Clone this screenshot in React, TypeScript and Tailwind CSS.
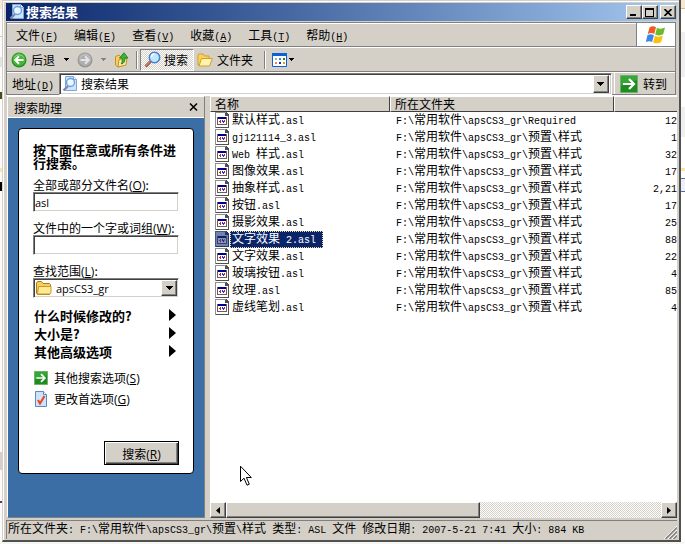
import React, { useState } from 'react';
import clsx from 'clsx';

const raised =
  'bg-[#d4d0c8] border border-t-white border-l-white border-r-[#404040] border-b-[#404040] shadow-[inset_-1px_-1px_0_#808080]';
const sunken =
  'bg-white border border-t-[#808080] border-l-[#808080] border-r-white border-b-white shadow-[inset_1px_1px_0_#404040,inset_-1px_-1px_0_#d4d0c8]';

const LOCATION = 'F:\\常用软件\\apsCS3_gr\\预置\\样式';

const files = [
  { name: '默认样式.asl', folder: 'F:\\常用软件\\apsCS3_gr\\Required', size: '12' },
  { name: 'gj121114_3.asl', folder: LOCATION, size: '1' },
  { name: 'Web 样式.asl', folder: LOCATION, size: '32' },
  { name: '图像效果.asl', folder: LOCATION, size: '17' },
  { name: '抽象样式.asl', folder: LOCATION, size: '2,21' },
  { name: '按钮.asl', folder: LOCATION, size: '17' },
  { name: '摄影效果.asl', folder: LOCATION, size: '25' },
  { name: '文字效果 2.asl', folder: LOCATION, size: '88' },
  { name: '文字效果.asl', folder: LOCATION, size: '22' },
  { name: '玻璃按钮.asl', folder: LOCATION, size: '4' },
  { name: '纹理.asl', folder: LOCATION, size: '85' },
  { name: '虚线笔划.asl', folder: LOCATION, size: '4' },
];

const menus = [
  { label: '文件', hotkey: 'F' },
  { label: '编辑', hotkey: 'E' },
  { label: '查看', hotkey: 'V' },
  { label: '收藏', hotkey: 'A' },
  { label: '工具', hotkey: 'T' },
  { label: '帮助', hotkey: 'H' },
];

// Latin runs are half as wide as the Chinese glyphs next to them
const Mixed = ({ text }: { text: string }) => (
  <>
    {text.split(/([\x20-\x7e]+)/).map((part, i) =>
      i % 2 ? (
        <span key={i} className="font-['Liberation_Mono',monospace] text-[10px] leading-none whitespace-pre">
          {part}
        </span>
      ) : (
        part
      )
    )}
  </>
);

const MonoHotkey = ({ letter }: { letter: string }) => (
  <span className="font-['Liberation_Mono',monospace] text-[10px] leading-none">
    (<u>{letter}</u>)
  </span>
);

const Hotkey = ({ letter }: { letter: string }) => (
  <span className="font-['Open_Sans',sans-serif] leading-none">
    (<u>{letter}</u>)
  </span>
);

const SearchPageIcon = () => (
  <svg width="16" height="16" viewBox="0 0 16 16" className="shrink-0">
    <path d="M3.5.5h8l3 3v11h-11z" fill="#cfe3fb" stroke="#7fa6da" />
    <path d="M11.5.5v3h3" fill="#fff" stroke="#7fa6da" />
    <path d="M6 10 1.5 14.5" stroke="#7c8cae" strokeWidth="2.4" />
    <circle cx="8.500" cy="6.500" r="4" fill="#e6f7ff" stroke="#6c9fdc" strokeWidth="1.4" />
    <path d="M6.500 6c.2-1 1-1.600 2-1.700" fill="none" stroke="#fff" strokeWidth="1.200" />
  </svg>
);

const MagnifierIcon = () => (
  <svg width="17" height="17" viewBox="0 0 17 17" className="shrink-0">
    <path d="M6.5 10.5 1.5 15.5" stroke="#a4583e" strokeWidth="3" />
    <path d="M6.5 10 1.5 15" stroke="#e6a184" strokeWidth="1" />
    <circle cx="10.500" cy="6.500" r="5.200" fill="#bfe8fd" stroke="#4b7fd0" strokeWidth="1.500" />
    <path d="M7.500 6c0-2 1.500-3 3-3" fill="none" stroke="#fff" strokeWidth="1.500" />
  </svg>
);

const RoundArrowIcon = ({ forward = false }: { forward?: boolean }) => (
  <svg width="16" height="16" viewBox="0 0 16 16" className="shrink-0">
    <circle cx="8" cy="8" r="7.500" fill={forward ? '#959595' : '#23911f'} />
    <circle cx="8" cy="7.500" r="6.500" fill={forward ? '#aeaeae' : '#46b53a'} />
    <path d="M3 6a5.500 5.500 0 0 1 10 0" fill="none" stroke={forward ? '#c6c6c6' : '#8fdc84'} />
    <path
      d={forward ? 'M3.500 8h8M8 4.200 11.800 8 8 11.800' : 'M12.500 8h-8M8 4.200 4.200 8 8 11.800'}
      fill="none"
      stroke={forward ? '#e4e4e4' : '#fff'}
      strokeWidth="2"
    />
  </svg>
);

const FolderUpIcon = () => (
  <svg width="16" height="16" viewBox="0 0 16 16" className="shrink-0">
    <path d="M1.500 4.500 5 3l1.500 1.500 5-.5v8.500L4 15l-2.500-2z" fill="#f6cf5c" stroke="#c1922a" />
    <path d="m4 15 1-7.500 8-1.500-1 7z" fill="#ffeb9c" stroke="#c1922a" />
    <path
      d="M7.500 12c3-1 3.500-3 3.500-6h3L10 .8 5.500 6h2.700c0 3 0 4-1 6z"
      fill="#3cb43c"
      stroke="#167a1c"
      strokeWidth=".8"
    />
  </svg>
);

const OpenFolderIcon = () => (
  <svg width="16" height="16" viewBox="0 0 16 16" className="shrink-0">
    <path d="M1 13V3l1-1h4l1.500 2H12v9z" fill="#f9d25e" stroke="#d19f2b" />
    <path d="M2 14 4.500 6.500h10.800L12.500 14z" fill="#fff3ae" stroke="#d19f2b" />
  </svg>
);

const FolderIcon = () => (
  <svg width="16" height="14" viewBox="0 0 16 14" className="shrink-0">
    <path d="M.5 12V2l1-1.500h4l1.500 2h6.500l1 1V12l-1 1.500h-12z" fill="#f6cf5f" stroke="#a87d1e" />
    <path d="M2.500 5.500h12.500v6l-1 1.500h-12.500z" fill="#ffe992" stroke="#c99829" />
  </svg>
);

const ViewsIcon = () => (
  <svg width="15" height="14" viewBox="0 0 15 14" className="shrink-0">
    <path d="M.5.5h14v13H.5z" fill="#fff" stroke="#0b62d8" />
    <path d="M0 0h15v3H0z" fill="#0b62d8" />
    <path d="M3 5h2v2H3z" fill="#a8a8c4" />
    <path d="M7 5h2v2H7z" fill="#4f7fd0" />
    <path d="M11 5h2v2h-2z" fill="#1c8a1c" />
    <path d="M3 9h2v2H3z" fill="#f0805c" />
    <path d="M7 9h2v2H7z" fill="#123c9c" />
    <path d="M11 9h2v2h-2z" fill="#e0a21c" />
  </svg>
);

const GoIcon = ({ size }: { size: number }) => (
  <svg width={size} height={size} viewBox="0 0 18 18" className="shrink-0">
    <path d="M.5.5h17v17H.5z" fill="#1f8c22" stroke="#6fae6e" />
    <path d="M1 1h16v4L1 11z" fill="#48b546" opacity=".6" />
    <path d="M3 9h11M9 4l5 5-5 5" fill="none" stroke="#fff" strokeWidth="2.200" />
  </svg>
);

const PreferencesIcon = () => (
  <svg width="14" height="16" viewBox="0 0 14 16" className="shrink-0">
    <path d="M1.500.5h8l3 3v12h-11z" fill="#cfe2fa" stroke="#5d8ac6" />
    <path d="M9.500.5v3h3" fill="#fff" stroke="#5d8ac6" />
    <path d="m4 9 2 3.500L10.500 5" fill="none" stroke="#e8451c" strokeWidth="2" />
  </svg>
);

const FileIcon = ({ selected }: { selected: boolean }) => (
  <svg width="14" height="16" viewBox="0 0 14 16" shapeRendering="crispEdges" className="shrink-0">
    <path d="M0 0h11l3 3v13H0z" fill={selected ? '#26345e' : '#505050'} />
    <path d="M1 1h9v3h3v11H1z" fill={selected ? '#7483ad' : '#fff'} />
    <path d="M0 0h11v1H1v15H0z" fill={selected ? '#46557f' : '#909090'} />
    <path d="M2 5h10v8H2z" fill={selected ? '#34446f' : '#606060'} />
    <path d="M3 6h8v6H3z" fill={selected ? '#8592b8' : '#fff'} />
    <path d="M3 5h8v2H3z" fill={selected ? '#0a246a' : '#000090'} />
    <path d="M4 9h1v1H4zM5 8h1v3H5z" fill={selected ? '#8a2a5c' : '#e01818'} />
    <path d="M7 8h1v2H7zM8 9h1v2H8z" fill={selected ? '#1a2fa0' : '#2432e8'} />
    <path d="M9 8h1v2H9z" fill={selected ? '#3b6c7c' : '#e01818'} />
  </svg>
);

const WindowsFlag = () => (
  <svg width="20" height="20" viewBox="0 0 20 20">
    <path d="M3.500 2.500C6 .8 8 1 10 2.200L8.200 9C6.200 7.800 4 7.800 1.700 9.200z" fill="#ee5a24" />
    <path d="M11 2.800c2.500 1.300 5 1.300 8-.2L17.200 9.300c-2.800 1.500-5 1.500-8 .2z" fill="#6bbb2c" />
    <path d="M1.400 10.300c2.400-1.400 4.500-1.300 6.500-.1L6.100 17C4 15.800 2 15.900-.2 17.200z" fill="#3c86e8" />
    <path d="M8.900 10.700c2.900 1.300 5.200 1.300 8-.2l-1.800 6.700c-2.800 1.500-5.200 1.500-8 .2z" fill="#fbbf12" />
  </svg>
);

const DownArrow = ({ muted = false }: { muted?: boolean }) => (
  <svg width="5" height="3" viewBox="0 0 5 3" shapeRendering="crispEdges" className="shrink-0">
    <path d="M0 0h5v1H4v1H3v1H2V2H1V1H0z" fill={muted ? '#808080' : '#000'} />
  </svg>
);

const DropArrow = () => (
  <svg width="7" height="4" viewBox="0 0 7 4" shapeRendering="crispEdges" className="shrink-0">
    <path d="M0 0h7v1H6v1H5v1H4v1H3V3H2V2H1V1H0z" />
  </svg>
);

const ScrollArrow = ({ right = false }: { right?: boolean }) => (
  <svg width="4" height="7" viewBox="0 0 4 7" className="shrink-0">
    <path d={right ? 'M0 0v7l4-3.500z' : 'M4 0v7L0 3.500z'} />
  </svg>
);

const Divider = () => <div className="h-[18px] w-[2px] shrink-0 border-l border-[#808080] bg-white" />;

const TitleBar = () => (
  <header className="flex h-[18px] items-center bg-linear-to-r from-[#0a246a] to-[#a6caf0] pr-px pl-[3px]">
    <SearchPageIcon />
    <h1 className="ml-px flex-1 text-[13px] leading-[16px] font-bold text-white">搜索结果</h1>
    <button aria-label="最小化" className={clsx(raised, 'flex h-[14px] w-[16px] items-end pb-[2px] pl-[3px]')}>
      <span className="h-[2px] w-[6px] bg-black" />
    </button>
    <button aria-label="最大化" className={clsx(raised, 'flex h-[14px] w-[16px] items-center pl-[2px]')}>
      <span className="h-[9px] w-[9px] border border-t-2 border-black" />
    </button>
    <button aria-label="关闭" className={clsx(raised, 'ml-[2px] flex h-[14px] w-[16px] items-center pl-[3px]')}>
      <svg width="8" height="7" viewBox="0 0 8 7">
        <path d="m.5 0 7 7m0-7-7 7" stroke="#000" strokeWidth="1.600" />
      </svg>
    </button>
  </header>
);

const MenuBar = () => (
  <div className="flex h-6 border-t border-[#808080]">
    <nav className="flex flex-1 items-center border-t border-white pl-px">
      {menus.map((menu) => (
        <button key={menu.hotkey} className="px-2 whitespace-nowrap">
          {menu.label}
          <MonoHotkey letter={menu.hotkey} />
        </button>
      ))}
    </nav>
    <div className="flex w-[39px] items-center justify-center border-l border-[#808080] bg-white">
      <WindowsFlag />
    </div>
  </div>
);

const Toolbar = () => (
  <div className="border-t border-[#808080]">
    <div className="flex h-6 items-center border-t border-white pl-1">
      <button className="flex items-center gap-1">
        <RoundArrowIcon />
        后退
      </button>
      <button aria-label="后退历史" className="ml-[9px]">
        <DownArrow />
      </button>
      <button aria-label="前进" className="ml-2">
        <RoundArrowIcon forward />
      </button>
      <button aria-label="前进历史" className="ml-2">
        <DownArrow muted />
      </button>
      <button aria-label="向上" className="mr-[6px] ml-2">
        <FolderUpIcon />
      </button>
      <Divider />
      <button
        aria-pressed="true"
        className="ml-[2px] flex h-[22px] w-[54px] items-center gap-[3px] border border-t-[#808080] border-r-white border-b-white border-l-[#808080] bg-[repeating-conic-gradient(#fff_0_25%,#d4d0c8_0_50%)] bg-[length:2px_2px] pl-[3px] whitespace-nowrap"
      >
        <MagnifierIcon />
        搜索
      </button>
      <button className="mr-[11px] ml-[3px] flex items-center gap-1">
        <OpenFolderIcon />
        文件夹
      </button>
      <Divider />
      <button aria-label="查看方式" className="ml-[6px] flex items-center gap-[2px]">
        <ViewsIcon />
        <DownArrow />
      </button>
    </div>
  </div>
);

const AddressBar = () => (
  <div className="border-y border-[#808080]">
    <div className="flex h-[22px] items-center border-t border-white pl-[5px]">
      <label htmlFor="address" className="w-[47px] whitespace-nowrap">
        地址
        <MonoHotkey letter="D" />
      </label>
      <div className={clsx(sunken, 'flex h-[22px] min-w-0 flex-1 items-center p-[2px]')}>
        <SearchPageIcon />
        <input id="address" defaultValue="搜索结果" className="ml-[3px] min-w-0 flex-1 outline-none" />
        <button aria-label="展开地址" className={clsx(raised, 'flex h-[18px] w-4 items-center justify-center')}>
          <DropArrow />
        </button>
      </div>
      <button className="ml-[2px] flex h-full items-center gap-[5px] border-l border-white pr-2 pl-[5px] whitespace-nowrap">
        <GoIcon size={18} />
        转到
      </button>
    </div>
  </div>
);

const SearchPane = () => {
  const [name, setName] = useState('asl');
  const [phrase, setPhrase] = useState('');

  return (
    <aside className="flex w-[198px] shrink-0 flex-col border border-t-white border-r-[#808080] border-b-[#808080] border-l-white">
      <div className="flex h-[21px] items-center justify-between border-b border-white px-[6px]">
        <h2>搜索助理</h2>
        <button aria-label="关闭搜索助理">
          <svg width="9" height="8" viewBox="0 0 9 8">
            <path d="m1 .5 7 7m0-7-7 7" stroke="#000" strokeWidth="1.500" />
          </svg>
        </button>
      </div>
      <div className="flex-1 bg-[#3a6ea5] px-[10px] pt-[10px] pb-8">
        <form
          onSubmit={(e) => e.preventDefault()}
          className="flex flex-col rounded-[4px] border border-black bg-white px-[14px] pt-[14px] pb-2"
        >
          <p className="text-[13px] leading-[13px] font-bold">按下面任意或所有条件进行搜索。</p>
          <label htmlFor="file-name" className="mt-2">
            全部或部分文件名
            <Hotkey letter="O" />:
          </label>
          <input
            id="file-name"
            value={name}
            onChange={(e) => setName(e.target.value)}
            className={clsx(sunken, "h-5 px-px font-['Open_Sans',sans-serif] text-[11px]")}
          />
          <label htmlFor="phrase" className="mt-2">
            文件中的一个字或词组
            <Hotkey letter="W" />:
          </label>
          <input
            id="phrase"
            value={phrase}
            onChange={(e) => setPhrase(e.target.value)}
            className={clsx(sunken, "h-5 px-px font-['Open_Sans',sans-serif] text-[11px]")}
          />
          <label htmlFor="look-in" className="mt-2">
            查找范围
            <Hotkey letter="L" />:
          </label>
          <div className={clsx(sunken, 'relative flex h-5 items-center pl-[2px]')}>
            <FolderIcon />
            <select
              id="look-in"
              className="h-4 flex-1 appearance-none pl-1 font-['Open_Sans',sans-serif] text-[11px] outline-none"
            >
              <option>apsCS3_gr</option>
            </select>
            <span
              className={clsx(
                raised,
                'pointer-events-none absolute top-px right-px flex h-4 w-4 items-center justify-center'
              )}
            >
              <DropArrow />
            </span>
          </div>
          <div className="mt-2 flex flex-col">
            {['什么时候修改的?', '大小是?', '其他高级选项'].map((option) => (
              <button
                type="button"
                key={option}
                className="flex h-[18px] items-center justify-between pr-[3px] pl-px text-[13px] font-bold"
              >
                {option}
                <svg width="7" height="12" viewBox="0 0 7 12">
                  <path d="M0 0v12l7-6z" />
                </svg>
              </button>
            ))}
          </div>
          <a href="#options" className="mt-[7px] flex h-[21px] items-center gap-[6px] pl-px">
            <GoIcon size={14} />
            <span>
              其他搜索选项
              <Hotkey letter="S" />
            </span>
          </a>
          <a href="#preferences" className="flex h-[21px] items-center gap-[6px] pl-px">
            <PreferencesIcon />
            <span>
              更改首选项
              <Hotkey letter="G" />
            </span>
          </a>
          <button
            type="submit"
            className="mt-8 h-6 w-[75px] self-end border border-black bg-[#d4d0c8] shadow-[inset_1px_1px_0_#fff,inset_-1px_-1px_0_#404040,inset_-2px_-2px_0_#808080]"
          >
            搜索
            <Hotkey letter="R" />
          </button>
        </form>
      </div>
    </aside>
  );
};

const FileList = () => {
  const [selected, setSelected] = useState('文字效果 2.asl');
  const heading =
    'h-4 border border-t-white border-r-[#404040] border-b-[#404040] border-l-white bg-[#d4d0c8] p-0 pl-1 text-left leading-[14px] font-normal';

  return (
    <section className="relative flex min-w-0 flex-1 flex-col bg-white">
      <div className="flex-1 overflow-hidden">
        <table className="w-full table-fixed border-separate border-spacing-0">
          <thead>
            <tr>
              <th className={clsx(heading, 'w-[180px]')}>名称</th>
              <th className={clsx(heading, 'w-[224px]')}>所在文件夹</th>
              <th className={clsx(heading, 'border-r-0')} aria-label="大小" />
            </tr>
          </thead>
          <tbody>
            {files.map((file) => {
              const active = file.name === selected;
              return (
                <tr key={file.name} className="h-[17px] align-top leading-[14px]" onClick={() => setSelected(file.name)}>
                  <td className="p-0 pl-[5px]">
                    <div className="flex h-[17px] items-start gap-px">
                      <FileIcon selected={active} />
                      <span
                        className={clsx(
                          'h-[17px] border pl-px leading-[12px] whitespace-nowrap',
                          active
                            ? 'border-dotted border-[#f5db95] bg-[#0a246a] pr-[6px] text-white'
                            : 'border-transparent'
                        )}
                      >
                        <Mixed text={file.name} />
                      </span>
                    </div>
                  </td>
                  <td className="p-0 pl-[6px] whitespace-nowrap">
                    <Mixed text={file.folder} />
                  </td>
                  <td className="p-0 text-right">
                    <Mixed text={file.size} />
                  </td>
                </tr>
              );
            })}
          </tbody>
        </table>
      </div>
      <div className="flex h-4 bg-[repeating-conic-gradient(#fff_0_25%,#d4d0c8_0_50%)] bg-[length:2px_2px]">
        <button aria-label="向左滚动" className={clsx(raised, 'flex w-4 items-center justify-center')}>
          <ScrollArrow />
        </button>
        <div className={clsx(raised, 'w-[254px]')} />
        <button aria-label="向右滚动" className={clsx(raised, 'ml-auto flex w-4 items-center justify-center')}>
          <ScrollArrow right />
        </button>
      </div>
      <svg
        width="12"
        height="21"
        viewBox="0 0 12 21"
        className="pointer-events-none absolute bottom-8 left-[30px]"
      >
        <path d="M.5 1.200v15.300L4 13.200l3 7 2.300-1-2.900-6.700h4.900z" fill="#fff" stroke="#000" />
      </svg>
    </section>
  );
};

const StatusBar = () => (
  <footer className="mt-[2px] flex h-[19px] items-center border-t border-l border-[#808080] pl-px whitespace-nowrap">
    <p className="flex-1 pb-1">
      <Mixed text={`所在文件夹: ${LOCATION} 类型: ASL 文件 修改日期: 2007-5-21 7:41 大小: 884 KB`} />
    </p>
    <svg width="13" height="13" viewBox="0 0 13 13" className="self-end">
      <path d="M0 13 13 0M4 13l9-9M8 13l5-5" stroke="#fff" />
      <path d="M1.500 13 13 1.500M5.500 13 13 5.500M9.500 13 13 9.500" stroke="#808080" strokeWidth="1.500" />
    </svg>
  </footer>
);

// Slivers of the windows lying behind this one
const LeftBackdrop = () => (
  <div className="flex w-[2px] shrink-0 flex-col bg-[#fbfbfb]">
    <div className="h-[9px] bg-[#f6ecd4]" />
    <div className="mt-[27px] h-px bg-[#c8c8c8]" />
    <div className="mt-[20px] h-[10px] bg-[#e4e4e4]" />
    <div className="mt-[25px] h-[7px] bg-[#4a4a20]" />
    <div className="mt-[69px] h-[4px] bg-[#f8e6b0]" />
    <div className="mt-[10px] h-[9px] bg-black" />
    <div className="mt-[261px] h-[18px] bg-[#d4d0c8]" />
    <div className="mt-[31px] h-[2px] bg-[#703060]" />
  </div>
);

const RightBackdrop = () => (
  <div className="flex w-[4px] shrink-0 flex-col bg-white">
    <div className="h-[9px] border-b border-[#d8bc74] bg-[#f3ead6]" />
    <div className="mt-[23px] h-[45px] bg-[#efefef]" />
    <div className="mt-[30px] h-[30px] bg-[#efefef]" />
    <div className="mt-[31px] h-[3px] bg-[#fbe6a0]" />
    <div className="mt-[7px] h-[14px] border-y border-[#4a6f9c] bg-[#eef2f8]" />
  </div>
);

export default function App() {
  return (
    <div className="flex min-h-screen bg-[#f6f6f3] pb-[2px] font-['Noto_Sans_CJK_SC',sans-serif] text-xs leading-[15px] text-black">
      <LeftBackdrop />
      <div className="flex min-w-0 flex-1 flex-col border-r-2 border-b-2 border-l border-[#d4d0c8] border-r-[#505050] border-b-[#505050] bg-[#d4d0c8]">
        <div className="mt-px flex flex-1 flex-col border-t border-l border-white pt-px pr-[2px] pb-px pl-[2px]">
          <TitleBar />
          <div className="mt-px mr-px border-r border-l border-r-[#808080] border-l-[#808080]">
            <MenuBar />
            <Toolbar />
            <AddressBar />
          </div>
          <main className="flex flex-1 gap-[5px] border-t border-white pl-px">
            <SearchPane />
            <FileList />
          </main>
          <StatusBar />
        </div>
      </div>
      <RightBackdrop />
    </div>
  );
}
